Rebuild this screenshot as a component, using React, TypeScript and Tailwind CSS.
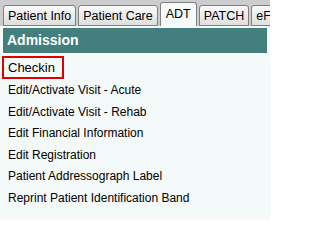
const tabs = ["Patient Info", "Patient Care", "ADT", "PATCH", "eForms"];

const items = [
  "Edit/Activate Visit - Acute",
  "Edit/Activate Visit - Rehab",
  "Edit Financial Information",
  "Edit Registration",
  "Patient Addressograph Label",
  "Reprint Patient Identification Band",
];

export default function App() {
  return (
    <div
      className="w-[270px] h-[220px] overflow-hidden bg-[#f4f9f9] text-black"
      style={{ fontFamily: '"Liberation Sans", Arial, sans-serif' }}
    >
      {/* tab strip */}
      <div className="flex items-end gap-[2px] h-[26px] pl-[3px] bg-[#cdcdcd] whitespace-nowrap overflow-hidden">
        {tabs.map((t) =>
          t === "ADT" ? (
            <div
              key={t}
              className="h-[24px] px-[5px] pt-[3px] text-[12.5px] leading-[16px] bg-[#f4f9f9] border border-b-0 border-[#808080] rounded-t-[3px]"
            >
              {t}
            </div>
          ) : (
            <div
              key={t}
              className="h-[21px] px-[4px] pt-[2px] text-[12.5px] leading-[16px] bg-gradient-to-b from-[#fafafa] to-[#dedede] border border-[#808080] rounded-t-[3px]"
            >
              {t}
            </div>
          )
        )}
      </div>

      {/* panel */}
      <div className="pt-[2px] px-[3px]">
        <div className="h-[25px] bg-[#437f7c] text-white font-bold text-[14px] leading-[25px] pl-[4px]">
          Admission
        </div>
        <div className="pt-[3px] text-[12px]">
          <div className="w-[62px] border-2 border-[#e00000] pl-[4px] h-[23px] leading-[19px] -ml-px text-[13px] mb-px">
            Checkin
          </div>
          {items.map((i) => (
            <div key={i} className="pl-[5px] h-[21.6px] leading-[21.6px]">
              {i}
            </div>
          ))}
        </div>
      </div>
    </div>
  );
}
